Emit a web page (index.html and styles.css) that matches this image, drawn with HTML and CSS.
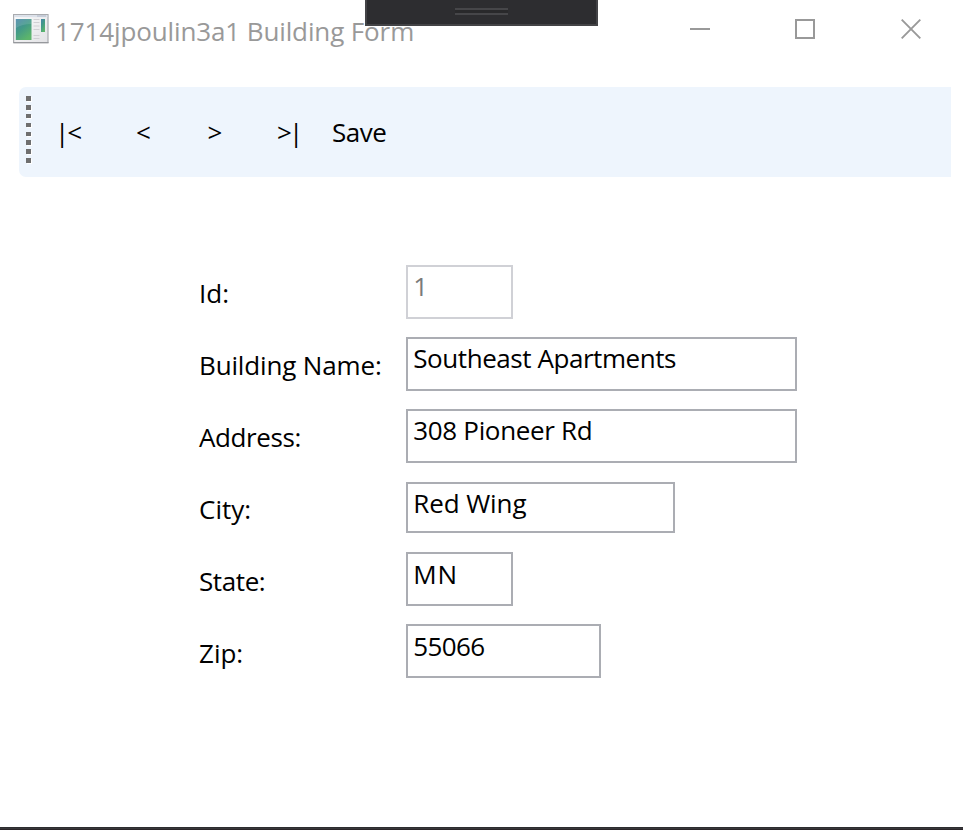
FILE: index.html
```
<!DOCTYPE html>
<html lang="en">
<head>
<meta charset="utf-8">
<title>1714jpoulin3a1 Building Form</title>
<link rel="stylesheet" href="styles.css">
</head>
<body>
<div class="window">
  <header class="titlebar">
    <svg class="app-icon" width="36" height="30" viewBox="0 0 36 30">
      <defs>
        <linearGradient id="pane" x1="0" y1="0" x2="0.6" y2="1">
          <stop offset="0" stop-color="#4583a8"/>
          <stop offset="0.5" stop-color="#439a87"/>
          <stop offset="1" stop-color="#5cb56b"/>
        </linearGradient>
        <linearGradient id="frame" x1="0" y1="0" x2="1" y2="1">
          <stop offset="0" stop-color="#fcfcfc"/>
          <stop offset="1" stop-color="#e2e2e5"/>
        </linearGradient>
      </defs>
      <rect x="0.6" y="0.6" width="34.400" height="28" fill="url(#frame)" stroke="#a9abaf" stroke-width="1.200"/>
      <rect x="1.200" y="1.200" width="33.200" height="2" fill="#dbe1ea"/>
      <path d="M24 2h9" stroke="#b1b9c7" stroke-width="1"/>
      <rect x="2.800" y="5" width="15.700" height="21" fill="url(#pane)"/>
      <path d="M3 14q6-4 15.500-4V5H3z" fill="#fff" opacity=".12"/>
      <path d="M20.500 5.500h6M20.500 8.500h6M20.500 12h6M20.500 15.500h6M20.500 21.500h6M20.500 24.500h6" stroke="#d0d0d3" stroke-width="1"/>
      <rect x="28" y="5" width="4" height="13" fill="url(#pane)"/>
      <path d="M.5 28.700H35.500" stroke="#96989c" stroke-width="1.200"/>
    </svg>
    <h1 class="title">1714jpoulin3a1 Building Form</h1>
    <div class="controls">
      <svg width="20" height="20" viewBox="0 0 20 20"><path d="M0 10H20" stroke="#999" stroke-width="2"/></svg>
      <svg width="20" height="20" viewBox="0 0 20 20"><rect x="1" y="1" width="18" height="18" fill="none" stroke="#999" stroke-width="2"/></svg>
      <svg width="20" height="20" viewBox="0 0 20 20"><path d="M.7.7l18.600 18.600M19.300.7L.7 19.300" fill="none" stroke="#999" stroke-width="1.900"/></svg>
    </div>
    <div class="debug-tab"><span class="handle"></span></div>
  </header>

  <nav class="toolbar">
    <div class="grip"><i></i><i></i><i></i><i></i><i></i><i></i><i></i><i></i></div>
    <span class="tool first">|&lt;</span>
    <span class="tool prev">&lt;</span>
    <span class="tool next">&gt;</span>
    <span class="tool last">&gt;|</span>
    <span class="tool save">Save</span>
  </nav>

  <main class="form">
    <div class="row"><label class="id-label">Id:</label><div class="field small disabled">1</div></div>
    <div class="row"><label class="name-label">Building Name:</label><div class="field wide name">Southeast Apartments</div></div>
    <div class="row"><label class="address-label">Address:</label><div class="field wide address">308 Pioneer Rd</div></div>
    <div class="row"><label class="city-label">City:</label><div class="field medium city">Red Wing</div></div>
    <div class="row"><label class="state-label">State:</label><div class="field small state">MN</div></div>
    <div class="row"><label class="zip-label">Zip:</label><div class="field zip">55066</div></div>
  </main>
  <footer class="edge"></footer>
</div>
</body>
</html>
```
FILE: styles.css
```
* { box-sizing: border-box; }
body { margin: 0; background: #fff; color: #000; font: 26px/36px "Open Sans", "Noto Sans", sans-serif; }
.window { display: flex; flex-direction: column; width: 963px; height: 830px; overflow: hidden; background: #fff; }

.titlebar { position: relative; display: flex; align-items: flex-start; height: 87px; padding-left: 13px; }
.app-icon { margin-top: 14px; }
.title { margin: 13px 0 0 6px; color: #999; font-size: 26px; font-weight: 400; letter-spacing: -.12px; white-space: nowrap; }
.controls { display: flex; gap: 85px; margin: 19px 42px 0 auto; }
.controls svg:last-child { margin-left: 1px; }
.debug-tab { position: absolute; top: 0; left: 365px; width: 233px; height: 26px; background: #2d2d30; border: 2px solid #434346; border-top: 0; }
.handle { display: block; width: 53px; height: 7px; margin: 8px 0 0 88px; background: #29292b; border: solid #464649; border-width: 2px 0; }

.toolbar { display: flex; align-items: flex-start; height: 90px; margin: 0 12px 0 19px; padding-top: 9px; background: #eef5fd; border-radius: 7px 0 0 7px; }
.grip { display: flex; flex-direction: column; gap: 4.2px; width: 36px; padding-left: 7px; }
.grip i { width: 4.7px; height: 4.7px; background: #6f6f6f; box-shadow: 1px 1px 0 #fff; }
.tool { margin-top: 18px; white-space: nowrap; }
.first { width: 81px; letter-spacing: -2px; }
.prev { width: 71.5px; }
.next { width: 69.5px; }
.last { width: 55px; letter-spacing: -2.8px; }
.save { letter-spacing: -.5px; }

.form { padding: 79px 0 0 199px; flex: 1; }
.row { display: flex; align-items: flex-start; height: 72px; padding-top: 9px; }
.row label { width: 207px; margin-top: 10px; white-space: nowrap; }
.field { height: 54px; padding: 1px 0 0 5.3px; border: 2px solid #abadb3; white-space: nowrap; }
.small { width: 107px; }
.wide { width: 391px; }
.medium { width: 269px; }
.disabled { border-color: #d0d1d6; color: #7a7a7a; }
.name-label { letter-spacing: -.15px; }
.address-label { letter-spacing: -.4px; }
.city-label, .zip-label { letter-spacing: 0; }
.state-label { letter-spacing: -.4px; }
.name { letter-spacing: -.44px; }
.address { letter-spacing: -.33px; }
.city { height: 51px; margin-top: 1px; letter-spacing: -.1px; }
.state { margin-top: -1px; padding-top: 2px; letter-spacing: .8px; }
.zip { width: 195px; margin-top: -1px; padding-top: 2px; letter-spacing: -.6px; }

.edge { height: 3px; background: #38373a; border-bottom: 1px solid #2b2529; border-top: 1px solid #2d2d30; }
```
